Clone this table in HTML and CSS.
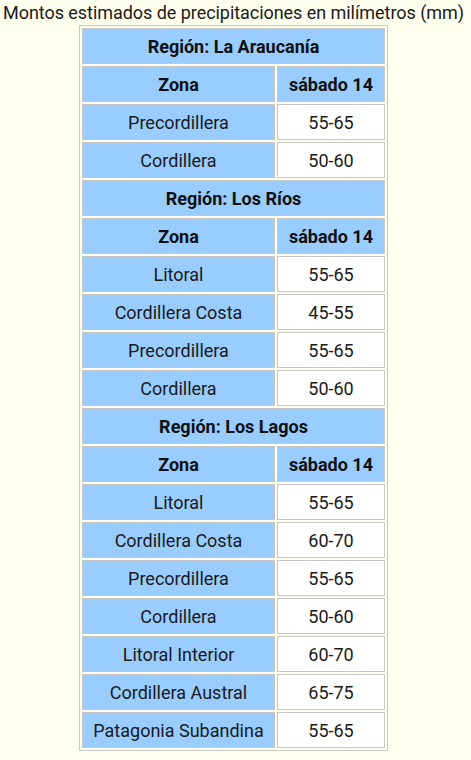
FILE: index.html
```html
<!DOCTYPE html>
<html lang="es">
<head>
<meta charset="utf-8">
<title>Montos estimados de precipitaciones</title>
<link rel="stylesheet" href="styles.css">
</head>
<body>
<div class="wrap">
  <div class="title">Montos estimados de precipitaciones en milímetros (mm)</div>
  <table class="rain">
    <tr><th colspan="2">Región: La Araucanía</th></tr>
    <tr><th class="zona">Zona</th><th class="dia">sábado 14</th></tr>
    <tr><td class="z">Precordillera</td><td class="v">55-65</td></tr>
    <tr><td class="z">Cordillera</td><td class="v">50-60</td></tr>
    <tr><th colspan="2">Región: Los Ríos</th></tr>
    <tr><th class="zona">Zona</th><th class="dia">sábado 14</th></tr>
    <tr><td class="z">Litoral</td><td class="v">55-65</td></tr>
    <tr><td class="z">Cordillera Costa</td><td class="v">45-55</td></tr>
    <tr><td class="z">Precordillera</td><td class="v">55-65</td></tr>
    <tr><td class="z">Cordillera</td><td class="v">50-60</td></tr>
    <tr><th colspan="2">Región: Los Lagos</th></tr>
    <tr><th class="zona">Zona</th><th class="dia">sábado 14</th></tr>
    <tr><td class="z">Litoral</td><td class="v">55-65</td></tr>
    <tr><td class="z">Cordillera Costa</td><td class="v">60-70</td></tr>
    <tr><td class="z">Precordillera</td><td class="v">55-65</td></tr>
    <tr><td class="z">Cordillera</td><td class="v">50-60</td></tr>
    <tr><td class="z">Litoral Interior</td><td class="v">60-70</td></tr>
    <tr><td class="z">Cordillera Austral</td><td class="v">65-75</td></tr>
    <tr><td class="z">Patagonia Subandina</td><td class="v">55-65</td></tr>
  </table>
</div>
</body>
</html>
```

FILE: styles.css
```css
html, body {
  margin: 0;
  padding: 0;
  background: #ffffee;
}
body {
  font-family: Roboto, "Noto Sans", sans-serif;
  color: #1a1a1a;
}
.wrap {
  width: 467px;
  display: flex;
  flex-direction: column;
  align-items: center;
}
.title {
  font-size: 18px;
  line-height: 25px;
  height: 25px;
  white-space: nowrap;
  letter-spacing: -0.05px;
}
.rain {
  border: 1px solid #c8c8c8;
  border-spacing: 2px;
  border-collapse: separate;
  font-size: 18px;
}
.rain th, .rain td {
  border: 1px solid #c8c8c8;
  height: 36px;
  padding: 0;
  text-align: center;
  vertical-align: middle;
  box-sizing: border-box;
}
.rain th {
  background: #99ccff;
  font-weight: bold;
  color: #111;
}
.rain th.zona, .rain td.z {
  width: 193px;
}
.rain th.dia, .rain td.v {
  width: 108px;
}
.rain td.z {
  background: #99ccff;
}
.rain td.v {
  background: #ffffff;
}
```
